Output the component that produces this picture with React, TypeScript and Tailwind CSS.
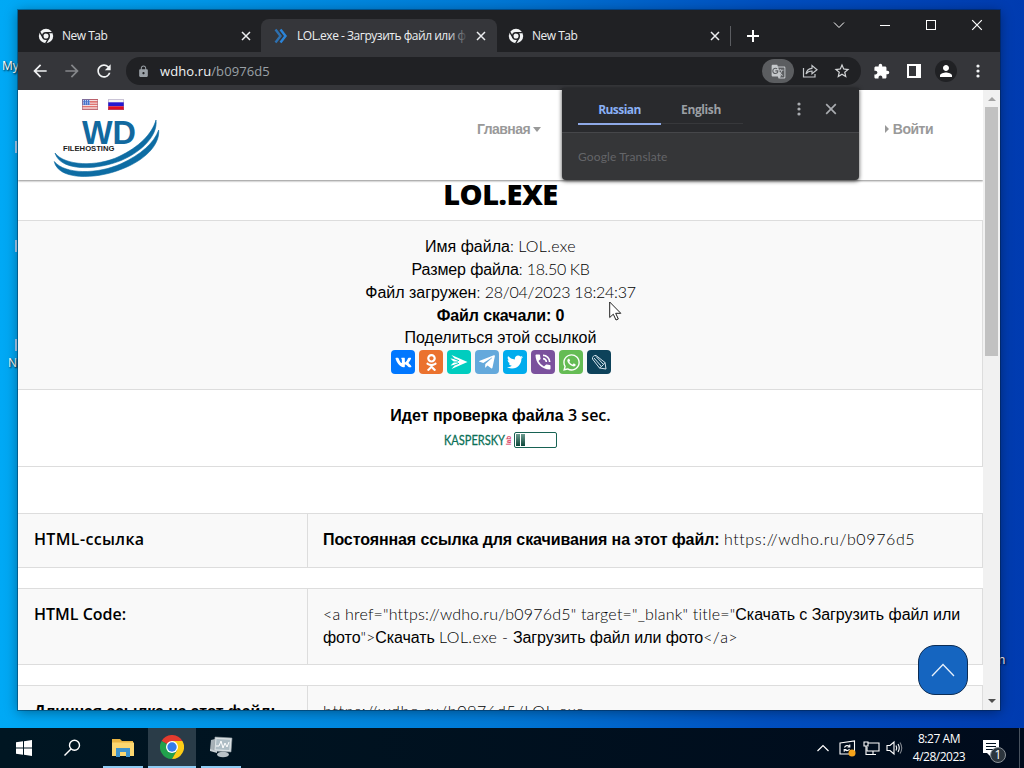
import type { ReactNode } from "react";
import {
  FaVk,
  FaOdnoklassniki,
  FaTelegramPlane,
  FaTwitter,
  FaWhatsapp,
} from "react-icons/fa";
import {
  MdArrowBack,
  MdArrowForward,
  MdExtension,
  MdGTranslate,
  MdLock,
  MdPerson,
  MdPhoneInTalk,
  MdRefresh,
  MdStarBorder,
} from "react-icons/md";

// ========================
// SMALL DRAWINGS
// ========================
const ChromeMono = () => (
  <svg viewBox="0 0 16 16" className="h-4 w-4 shrink-0">
    <circle cx="8" cy="8" r="7.2" fill="#f1f3f4" />
    <circle cx="8" cy="8" r="3.3" fill="#f1f3f4" stroke="#202124" strokeWidth="1.5" />
    <path d="M8 4.6H14.6M5 9.6L1.8 4M10.9 9.8L7.7 15.3" stroke="#202124" strokeWidth="1.4" />
  </svg>
);

const CloseX = ({ className }: { className: string }) => (
  <svg viewBox="0 0 10 10" className={className} fill="none" stroke="currentColor">
    <path d="M1 1L9 9M9 1L1 9" />
  </svg>
);

const Dots = ({ className }: { className: string }) => (
  <svg viewBox="0 0 4 14" className={className} fill="currentColor">
    <circle cx="2" cy="2" r="1.6" />
    <circle cx="2" cy="7" r="1.6" />
    <circle cx="2" cy="12" r="1.6" />
  </svg>
);

const UsFlag = () => (
  <svg viewBox="0 0 16 11" className="h-[11px] w-4">
    <rect width="16" height="11" fill="#f4dede" />
    <path d="M0 .5H16M0 2.9H16M0 5.3H16M0 7.7H16M0 10.3H16" stroke="#d9534f" strokeWidth="1.1" />
    <rect width="8" height="6" fill="#4a74c9" />
    <path d="M1 1.5H8M1 3.2H8M1 4.9H8" stroke="#dfe8fb" strokeWidth=".8" strokeDasharray="1 1" />
    <rect x=".5" y=".5" width="15" height="10" fill="none" stroke="#a66b7e" strokeOpacity=".6" />
  </svg>
);

const RuFlag = () => (
  <svg viewBox="0 0 16 11" className="h-[11px] w-4">
    <rect width="16" height="11" fill="#f5f5f5" />
    <rect y="3.3" width="16" height="4" fill="#2418d0" />
    <rect y="7.3" width="16" height="3.7" fill="#e00d20" />
    <rect x=".5" y=".5" width="15" height="10" fill="none" stroke="#8a7aa8" strokeOpacity=".4" />
  </svg>
);

const Logo = () => (
  <svg viewBox="0 0 108 60" className="block h-[60px] w-[108px] overflow-visible">
    <text x="29" y="28" textLength="54" lengthAdjust="spacingAndGlyphs" fontFamily="Liberation Sans, sans-serif" fontWeight="700" fontSize="33" fill="#12699f">
      WD
    </text>
    <text x="10" y="35" textLength="51.500" lengthAdjust="spacingAndGlyphs" fontFamily="Liberation Sans, sans-serif" fontWeight="700" fontSize="7.800" fill="#1b1b1b">
      FILEHOSTING
    </text>
    <path d="M2 37C12 50 44 51 66 40.500C86 31 99 18 103 4C105 20 88 36 68 44.500C42 55 7 55 2 37Z" fill="#0d6ca3" stroke="#0d6ca3" strokeWidth=".6" />
    <path d="M1.300 45.500C12 58.500 44 58.500 68 47.800C88 38.500 101 27 105.700 14C107 30 90 45 69 53C42 64 5 64 1.300 45.500Z" fill="#0d6ca3" stroke="#0d6ca3" strokeWidth=".6" />
  </svg>
);

const ShareIcon = () => (
  <svg viewBox="0 0 16 16" className="h-4 w-4" fill="none" stroke="#c5c8cb" strokeWidth="1.200">
    <path d="M1.500 5V14H13V11" />
    <path d="M4 11C4.500 7.500 6.500 5.600 10 5.300V2.500L15 6.700L10 10.700V8C7.500 8 5.500 8.800 4 11Z" />
  </svg>
);

// ========================
// BROWSER TABS
// ========================
const TabStrip = () => (
  <div className="flex h-[42px] items-end bg-[#202124] text-xs text-[#eceef0]">
    <div className="flex h-[33px] w-[243px] items-center pl-5 pr-[10px]">
      <ChromeMono />
      <span className="ml-2 flex-1 font-medium tracking-[-0.5px]">New Tab</span>
      <CloseX className="h-[10px] w-[10px] stroke-[1.500]" />
    </div>
    <div className="flex h-[33px] w-[236px] items-center rounded-t-lg bg-[#35363a] pl-3 pr-[11px]">
      <svg viewBox="0 0 16 16" className="h-4 w-4 shrink-0" fill="none" stroke="#2b84d8" strokeWidth="2.400">
        <path d="M2.500 1.500L7.500 8L2.500 14.500" strokeOpacity=".75" />
        <path d="M7.500 1.500L12.500 8L7.500 14.500" />
      </svg>
      <div className="relative ml-2 h-5 w-[171px] overflow-hidden whitespace-nowrap leading-5">
        <span className="font-medium tracking-[-0.48px]">LOL.exe - Загрузить файл или ф</span>
        <span className="absolute right-0 top-0 h-5 w-5 bg-gradient-to-r from-transparent to-[#35363a]" />
      </div>
      <CloseX className="ml-auto h-[10px] w-[10px] shrink-0 stroke-[1.500]" />
    </div>
    <div className="flex h-[33px] w-[233px] items-center pl-[11px] pr-[10px]">
      <ChromeMono />
      <span className="ml-2 flex-1 font-medium tracking-[-0.5px]">New Tab</span>
      <CloseX className="h-[10px] w-[10px] stroke-[1.500]" />
    </div>
    <div className="mb-[6px] h-5 w-px bg-[#5b5d61]" />
    <svg viewBox="0 0 12 12" className="mb-[10px] ml-4 h-3 w-3" stroke="#fff" strokeWidth="2">
      <path d="M6 0V12M0 6H12" />
    </svg>
    <div className="mb-[21px] ml-auto flex items-center pr-[17px] text-white">
      <svg viewBox="0 0 12 8" className="mr-[35px] h-2 w-3" fill="none" stroke="currentColor">
        <path d="M1 1.500L6 6.500L11 1.500" />
      </svg>
      <svg viewBox="0 0 10 10" className="mr-9 h-[10px] w-[10px]" stroke="currentColor">
        <path d="M0 5.500H10" />
      </svg>
      <div className="mr-[35px] h-[10px] w-[10px] border border-white" />
      <CloseX className="h-3 w-3" />
    </div>
  </div>
);

const Toolbar = () => (
  <div className="flex h-[38px] items-center bg-[#35363a] pr-[20px]">
    <MdArrowBack className="ml-[12px] h-[20px] w-[20px] text-[#f1f3f4]" />
    <MdArrowForward className="ml-[12px] h-[20px] w-[20px] text-[#85878a]" />
    <MdRefresh className="ml-[12px] h-5 w-5 text-[#f1f3f4]" />
    <div className="ml-[12px] flex h-7 w-[735px] items-center rounded-full bg-[#202124] pl-[11px] pr-[10px] text-[13px]">
      <MdLock className="h-[13px] w-[13px] text-[#9aa0a6]" />
      <span className="ml-[10px] whitespace-nowrap pt-px tracking-[0.1px] text-[#f1f3f4]">
        wdho.ru<span className="text-[#9aa0a6]">/b0976d5</span>
      </span>
      <span className="ml-auto flex h-6 w-8 items-center justify-center rounded-full bg-[#5b5d60]">
        <MdGTranslate className="h-[15px] w-[15px] text-[#c5c8cb]" />
      </span>
      <span className="ml-2">
        <ShareIcon />
      </span>
      <MdStarBorder className="ml-[15px] h-[18px] w-[18px] text-[#d5d7d9]" />
    </div>
    <MdExtension className="ml-[12px] h-[17px] w-[17px] shrink-0 text-white" />
    <div className="ml-[17px] h-[14px] w-[14px] shrink-0 border-2 border-r-[5px] border-white" />
    <span className="ml-[14px] flex h-[22px] w-[22px] shrink-0 items-center justify-center rounded-full bg-[#202124]">
      <MdPerson className="h-[18px] w-[18px] text-white" />
    </span>
    <Dots className="ml-auto h-[14px] w-1 text-[#f1f3f4]" />
  </div>
);

// ========================
// TRANSLATE POPUP
// ========================
const TranslatePopup = () => (
  <div className="absolute left-[544px] top-[78px] z-20 h-[92px] w-[297px] overflow-hidden rounded-b bg-[#353638] shadow-[0_1px_4px_rgba(0,0,0,0.7)]">
    <div className="flex h-[45px] items-start border-b border-[#46474a] bg-[#292a2d] pl-4 text-xs font-bold">
      <div className="flex h-[37px] w-[83px] items-center justify-center border-b-2 border-[#8ea9e6] pt-[8px] tracking-[-0.55px] text-[#8ab0f5]">
        Russian
      </div>
      <div className="flex h-[36px] w-[82px] items-center justify-center border-b border-[#37383b] pr-[2px] pt-[8px] tracking-[-0.4px] text-[#9b9fa4]">
        English
      </div>
      <Dots className="ml-[54px] mt-[14px] h-[14px] w-1 text-[#a9acb0]" />
      <CloseX className="ml-6 mt-[15px] h-[12px] w-[12px] stroke-[1.400] text-[#a9acb0]" />
    </div>
    <div className="pl-4 pt-[14px] font-['Lato',sans-serif] text-xs leading-5 tracking-[0.12px] text-[#646568]">Google Translate</div>
  </div>
);

// ========================
// FILE PAGE
// ========================
const shareLinks: { name: string; bg: string; icon: ReactNode }[] = [
  { name: "vk", bg: "bg-[#0077ff]", icon: <FaVk className="h-[17px] w-[17px]" /> },
  { name: "ok", bg: "bg-[#eb722e]", icon: <FaOdnoklassniki className="h-[17px] w-[17px]" /> },
  {
    name: "mir",
    bg: "bg-[#00cdbf]",
    icon: (
      <svg viewBox="0 0 24 24" className="h-6 w-6">
        <path d="M4.500 5L20.500 12L4.500 19L7.500 15.500L3.500 15.500L7 12L3.500 8.500L7.500 8.500Z" fill="#fff" />
        <path d="M4 7.500L12 10.700M3 12H11M4 16.500L12 13.300" stroke="#00cdbf" />
      </svg>
    ),
  },
  { name: "telegram", bg: "bg-[#64a9dc]", icon: <FaTelegramPlane className="h-[18px] w-[18px]" /> },
  { name: "twitter", bg: "bg-[#00aced]", icon: <FaTwitter className="h-4 w-4" /> },
  { name: "viber", bg: "bg-[#7b519d]", icon: <MdPhoneInTalk className="h-[20px] w-[20px]" /> },
  { name: "whatsapp", bg: "bg-[#65bc54]", icon: <FaWhatsapp className="h-[19px] w-[19px]" /> },
  {
    name: "livejournal",
    bg: "bg-[#0d425a]",
    icon: (
      <svg viewBox="0 0 24 24" className="h-6 w-6" fill="none" stroke="#d7e5ed" strokeWidth="1">
        <path d="M5.500 9C5 7 7 5 9 5.500L18 12.500L19 19L12.500 18Z" />
        <path d="M7 8L14.500 16.500M9 6.500L16.500 14.500M12.500 18L14.500 16.500L16.500 14.500L18 12.500" />
      </svg>
    ),
  },
];

const Light = ({ children, className = "" }: { children: ReactNode; className?: string }) => (
  <span className={`font-['Lato',sans-serif] font-light leading-none ${className}`}>{children}</span>
);

const FilePage = () => (
  <div className="flex h-[620px] bg-white">
    <div className="flex w-[965px] flex-col overflow-hidden font-['Liberation_Sans',sans-serif] text-base leading-[23px] text-black">
      {/* HEADER */}
      <header className="z-10 flex h-[90px] shrink-0 bg-white shadow-[0_1px_2px_rgba(0,0,0,0.45)]">
        <div className="w-[441px] pl-[35px] pt-[9px]">
          <div className="flex gap-[10px] pl-[29px]">
            <UsFlag />
            <RuFlag />
          </div>
          <div className="mt-[6px]">
            <Logo />
          </div>
        </div>
        <nav className="flex flex-1 items-center pl-[18px] pb-3 text-sm font-bold text-[#999]">
          <span className="tracking-[-0.55px]">Главная</span>
          <span className="ml-[3px] border-x-4 border-t-[5px] border-x-transparent border-t-[#999]" />
          <span className="ml-auto mr-1 border-y-4 border-l-4 border-y-transparent border-l-[#999]" />
          <span className="mr-[50px] tracking-[-0.5px]">Войти</span>
        </nav>
      </header>

      {/* TITLE */}
      <h1 className="flex h-[41px] shrink-0 justify-center border-b border-[#ddd] text-[29px] font-extrabold leading-[28px]">
        <span className="font-['Open_Sans',sans-serif] tracking-[-0.5px]">LOL.EXE</span>
      </h1>

      {/* FILE INFO */}
      <section className="flex h-[169px] shrink-0 flex-col items-center whitespace-nowrap border-b border-r border-[#ddd] bg-[#f9f9f9] pl-px pt-[14px]">
        <p className="h-[23px]">
          Имя файла<Light>: <span className="tracking-[0.3px]">LOL.exe</span></Light>
        </p>
        <p className="h-[23px] tracking-[-0.12px]">
          Размер файла<Light>: <span className="tracking-[-0.35px]">18.50 KB</span></Light>
        </p>
        <p className="h-[23px]">
          Файл загружен<Light>: <span className="tracking-[-0.25px]">28/04/2023 18:24:37</span></Light>
        </p>
        <p className="font-bold tracking-[-0.12px]">Файл скачали: 0</p>
        <p className="-mt-px">Поделиться этой ссылкой</p>
        <div className="ml-px mt-px flex gap-1">
          {shareLinks.map((link) => (
            <span key={link.name} className={`flex h-6 w-6 items-center justify-center rounded text-white ${link.bg}`}>
              {link.icon}
            </span>
          ))}
        </div>
      </section>

      {/* ANTIVIRUS CHECK */}
      <section className="flex h-[77px] shrink-0 flex-col items-center border-b border-r border-[#ddd] pl-px pt-[14px]">
        <p className="h-[23px] font-bold">
          Идет проверка файла <span className="font-['Open_Sans',sans-serif] font-semibold leading-none">3 sec.</span>
        </p>
        <div className="mt-[5px] flex">
          <svg viewBox="0 0 69 16" className="h-4 w-[69px] overflow-visible">
            <text x="0" y="13" textLength="61" lengthAdjust="spacingAndGlyphs" fontFamily="Lato, sans-serif" fontWeight="400" fontSize="13.500" fill="#0b7057" stroke="#0b7057" strokeWidth=".3">
              KASPERSKY
            </text>
            <text transform="translate(67 13) rotate(-90)" textLength="9" lengthAdjust="spacingAndGlyphs" fontFamily="Liberation Sans, sans-serif" fontWeight="700" fontSize="7" fill="#d9375c">
              lab
            </text>
          </svg>
          <div className="ml-px flex h-4 w-[43px] gap-px rounded-[2px] border border-[#176253] p-px">
            <span className="h-3 w-1 bg-gradient-to-b from-[#6c9c90] to-[#07483b]" />
            <span className="h-3 w-1 bg-gradient-to-b from-[#6c9c90] to-[#07483b]" />
          </div>
        </div>
      </section>

      {/* LINKS */}
      <section className="mt-[46px] flex w-full shrink-0 flex-col gap-5">
        <div className="flex h-[55px] border border-l-0 border-[#ddd] bg-[#f9f9f9]">
          <div className="w-[290px] border-r border-[#ddd] pl-4 pt-[14px] font-['Open_Sans',sans-serif] font-semibold tracking-[0.35px]">HTML-ссылка</div>
          <div className="whitespace-nowrap pl-[15px] pt-[14px]">
            <b className="tracking-[-0.1px]">Постоянная ссылка для скачивания на этот файл:</b>{" "}
            <Light className="tracking-[0.6px]">https://wdho.ru/b0976d5</Light>
          </div>
        </div>
        <div className="flex h-[77px] border border-l-0 border-[#ddd] bg-[#f9f9f9]">
          <div className="w-[290px] border-r border-[#ddd] pl-4 pt-[14px] font-['Open_Sans',sans-serif] font-semibold">HTML Code:</div>
          <div className="whitespace-nowrap pl-[15px] pt-[14px] tracking-[-0.06px]">
            <Light className="tracking-[0.2px]">&lt;a href="https://wdho.ru/b0976d5" target="_blank" title="</Light>Скачать с Загрузить файл или
            <br />
            фото<Light>"&gt;</Light>Скачать <Light className="tracking-[0.35px]">LOL.exe - </Light>Загрузить файл или фото<Light className="tracking-[0.35px]">&lt;/a&gt;</Light>
          </div>
        </div>
        <div className="flex h-[55px] border border-l-0 border-[#ddd] bg-[#f9f9f9]">
          <div className="w-[290px] whitespace-nowrap border-r border-[#ddd] pl-4 pt-[14px] font-bold tracking-[-0.15px]">Длинная ссылка на этот файл:</div>
          <div className="whitespace-nowrap pl-[15px] pt-[14px]">
            <Light className="tracking-[0.7px]">https://wdho.ru/b0976d5/LOL.exe</Light>
          </div>
        </div>
      </section>
    </div>

    {/* SCROLLBAR */}
    <div className="flex w-[17px] flex-col items-center bg-[#f1f1f1]">
      <span className="mt-[7px] border-x-[4px] border-b-[4px] border-x-transparent border-b-[#a3a3a3]" />
      <span className="mt-[6px] h-[249px] w-[13px] bg-[#c1c1c1]" />
      <span className="mb-[7px] mt-auto border-x-[4px] border-t-[4px] border-x-transparent border-t-[#505050]" />
    </div>
  </div>
);

// ========================
// TASKBAR
// ========================
const Taskbar = () => (
  <div className="flex h-10 items-center bg-gradient-to-r from-[#001622] to-[#000b1c] text-white">
    <svg viewBox="0 0 16 16" className="ml-4 h-4 w-4" fill="#fff">
      <path d="M0 2.300L7 1.300V7.500H0ZM8 1.150L16 0V7.500H8ZM0 8.500H7V14.700L0 13.700ZM8 8.500H16V16L8 14.850Z" />
    </svg>
    <svg viewBox="0 0 18 18" className="ml-[31px] h-[18px] w-[18px]" fill="none" stroke="#fff" strokeWidth="1.400">
      <circle cx="11.500" cy="6.300" r="5" />
      <path d="M8 10L1.500 16.500" />
    </svg>
    <div className="ml-[22px] flex h-10 w-10 items-center justify-center border-b-2 border-[#8ecbf3]">
      <svg viewBox="0 0 22 19" className="h-[19px] w-[22px]">
        <path d="M0 1H8L10 3H21V18H0Z" fill="#eab542" />
        <path d="M0 4.500H22V18H0Z" fill="#fcd770" />
        <path d="M4 10H18V19H14V14H8V19H4Z" fill="#3e93cd" />
      </svg>
    </div>
    <div className="ml-[5px] flex h-10 w-12 items-center justify-center border-b-2 border-[#8ecbf3] bg-[#2a3c48]">
      <svg viewBox="0 0 24 24" className="h-6 w-6">
        <path d="M12 12L1.600 6A12 12 0 0 1 22.400 6Z" fill="#e33b2e" />
        <path d="M12 12L1.600 6A12 12 0 0 0 12 24L17.200 15Z" fill="#21a04c" />
        <path d="M12 12L17.200 15L12 24A12 12 0 0 0 22.400 6H12Z" fill="#fdcc16" />
        <circle cx="12" cy="12" r="6" fill="#fff" />
        <circle cx="12" cy="12" r="4.700" fill="#347cea" />
      </svg>
    </div>
    <div className="ml-[5px] flex h-10 w-10 items-center justify-center border-b-2 border-[#8ecbf3]">
      <svg viewBox="0 0 24 22" className="h-[22px] w-6">
        <path d="M2 4L6 3V15L1 14Z" fill="#a7b1b7" />
        <path d="M6 1L23 2L22 16L5 15Z" fill="#d9e0e3" stroke="#8d999f" strokeWidth=".6" />
        <path d="M7.500 3L21 3.800L20.300 14L6.700 13.200Z" fill="#aebdc5" />
        <path d="M7 10L10 10L12 5L14 12L16 7L18 11L20 6" fill="none" stroke="#fff" />
        <ellipse cx="14" cy="18.500" rx="6" ry="2.800" fill="#b9c2c7" />
        <path d="M1 13L8 15L8 17L1 15Z" fill="#c7ced2" />
      </svg>
    </div>

    <div className="ml-auto flex items-center">
      <svg viewBox="0 0 12 8" className="h-2 w-3" fill="none" stroke="#fff" strokeWidth="1.200">
        <path d="M.5 7L6 1.500L11.500 7" />
      </svg>
      <svg viewBox="0 0 17 17" className="ml-[10px] h-[17px] w-[17px]" fill="none" stroke="#fff" strokeWidth="1.100">
        <path d="M1 3L15.500 1V14H1Z" />
        <path d="M5.500 7.500A3 3 0 0 1 10.500 6.500M10.800 4.500V7H8.500M10.500 9A3 3 0 0 1 5.500 9.500M5.200 11.800V9.500H7.500" />
        <circle cx="13" cy="13" r="3.500" fill="#f5a31a" stroke="none" />
      </svg>
      <svg viewBox="0 0 17 16" className="ml-[7px] h-4 w-[17px]" fill="none" stroke="#fff" strokeWidth="1.100">
        <path d="M5 3H16V11H4V7M10 11V14M6 14.500H13" />
        <path d="M1 2H5V6H1ZM3 6V14.500H6" />
      </svg>
      <svg viewBox="0 0 17 16" className="ml-[6px] h-4 w-[17px]" fill="none" stroke="#fff" strokeWidth="1.100">
        <path d="M1 5.500H4L8 2V14L4 10.500H1Z" />
        <path d="M10 5.500Q11.500 8 10 10.500M12 4Q14.500 8 12 12" />
        <path d="M14 2.500Q17.500 8 14 13.500" strokeOpacity=".5" />
      </svg>
      <div className="ml-[6px] flex w-[60px] flex-col items-center whitespace-nowrap text-xs leading-[18px]">
        <span className="tracking-[-0.45px]">8:27 AM</span>
        <span className="tracking-[-0.5px]">4/28/2023</span>
      </div>
      <div className="relative ml-[13px] mr-[12px] h-7 w-[25px]">
        <svg viewBox="0 0 17 17" className="mt-[6px] h-[17px] w-[17px]">
          <path d="M1 0H17V13H9V17L5 13H1Z" fill="#fff" />
          <path d="M4 3.500H14M4 6.500H14M4 9.500H11" stroke="#00101f" />
        </svg>
        <span className="absolute left-[8px] top-[13px] flex h-4 w-4 items-center justify-center rounded-full border border-[#8b9298] bg-[#2c353d] text-[12px] leading-none">
          1
        </span>
      </div>
      <div className="h-10 w-px bg-[#48525e]" />
      <div className="w-1" />
    </div>
  </div>
);

export default function App() {
  return (
    <div className="relative flex h-[768px] w-[1024px] flex-col overflow-hidden bg-[linear-gradient(90deg,#00a9f5_0%,#0096e8_20%,#0079d6_48%,#004fc0_75%,#003bb0_100%)] font-['Open_Sans','Noto_Sans',sans-serif]">
      {/* desktop labels that stick out from behind the window */}
      <span className="absolute left-[2px] top-[58px] text-xs text-white [text-shadow:1px_1px_2px_#000]">My</span>
      <span className="absolute left-[8px] top-[355px] text-xs text-white [text-shadow:1px_1px_2px_#000]">N</span>
      <span className="absolute left-[998px] top-[652px] text-xs text-white [text-shadow:1px_1px_2px_#000]">n</span>
      <span className="absolute left-[15px] top-[141px] h-3 w-[2px] bg-[#a9cdf0]" />
      <span className="absolute left-[15px] top-[240px] h-3 w-[2px] bg-[#a9cdf0]" />
      <span className="absolute left-[15px] top-[339px] h-3 w-[2px] bg-[#a9cdf0]" />

      <div className="h-[728px] shrink-0 pl-[18px] pt-[10px]">
        <div className="relative h-[700px] w-[982px] shadow-[0_0_0_1px_rgba(0,30,60,0.4),0_2px_12px_rgba(0,0,0,0.4)]">
          <TabStrip />
          <Toolbar />
          <FilePage />
          <TranslatePopup />
          <button className="absolute left-[900px] top-[635px] flex h-[50px] w-[50px] items-center justify-center rounded-[17px] border border-[#0c2d55] bg-[#1565c0]">
            <svg viewBox="0 0 24 14" className="h-[14px] w-6" fill="none" stroke="#e8f1fb" strokeWidth="1.300">
              <path d="M1 13L12 1.500L23 13" />
            </svg>
          </button>
          <svg viewBox="0 0 13 20" className="absolute left-[591px] top-[291px] h-5 w-[13px]">
            <path d="M.7 1V16.500L4.300 13.200L7 19L9.300 18L6.700 12.300H11.800Z" fill="#fff" stroke="#222" />
          </svg>
        </div>
      </div>
      <Taskbar />
    </div>
  );
}
